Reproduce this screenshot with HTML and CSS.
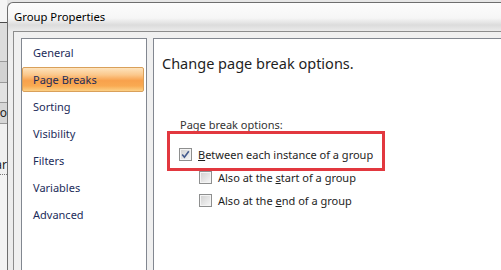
FILE: index.html
```html
<!DOCTYPE html>
<html>
<head>
  <meta charset="UTF-8" />
  <title>Group Properties</title>
  <link rel="stylesheet" href="styles.css">
</head>
<body>
  <div class="desktop">
    <div class="behind">
      <div class="behind-row r1"></div>
      <div class="behind-row r2"></div>
      <div class="behind-row r3"></div>
      <div class="behind-row r4"></div>
      <div class="behind-row r5"><span>Co</span></div>
      <div class="behind-row r6"><span>Var</span></div>
      <div class="behind-row r7"></div>
    </div>
    <div class="dialog">
      <div class="titlebar">Group Properties</div>
      <div class="client">
        <ul class="nav">
          <li>General</li>
          <li class="active">Page Breaks</li>
          <li>Sorting</li>
          <li>Visibility</li>
          <li>Filters</li>
          <li>Variables</li>
          <li>Advanced</li>
        </ul>
        <div class="page">
          <h2>Change page break options.</h2>
          <div class="group-label">Page break options:</div>
          <label class="check">
            <span class="box">
              <svg width="11" height="11" viewBox="0 0 11 11"><path d="M2.2 5.6 L4.4 8.2 L8.8 2.2" fill="none" stroke="#43598c" stroke-width="1.6"/></svg>
            </span>
            <span><u>B</u>etween each instance of a group</span>
          </label>
          <label class="check sub">
            <span class="box"></span>
            <span>Also at the <u>s</u>tart of a group</span>
          </label>
          <label class="check sub">
            <span class="box"></span>
            <span>Also at the <u>e</u>nd of a group</span>
          </label>
          <!-- red annotation box drawn over the first option -->
          <div class="highlight"></div>
        </div>
      </div>
    </div>
  </div>
</body>
</html>
```
FILE: styles.css
```css
body {
  margin: 0;
  padding: 0;
  overflow: hidden;
  font-family: "Noto Sans", "Open Sans", sans-serif;
  font-size: 11px;
  background-color: #e6e6e6;
}
.desktop {
  display: flex;
  height: 290px;
}
.behind {
  width: 7px;
  overflow: hidden;
  background-color: #ececec;
  display: flex;
  flex-direction: column;
}
.behind-row {
  border-bottom: 1px solid #9a9a9a;
  white-space: nowrap;
  direction: rtl;
  font-size: 12px;
  color: #222;
}
.r1 { height: 22px; border-bottom-color: #4a4a4a; background-color: #f4f4f4; }
.r2 { height: 38px; background-color: #dcdcdc; }
.r3 { height: 20px; background-color: #d2d2d2; }
.r4 { height: 19px; background-color: #e2e2e2; }
.r5 { height: 20px; line-height: 20px; background-color: #d6d6d6; }
.r6 { height: 50px; line-height: 82px; background-color: #f0f0f0; border-bottom: 1px dotted #777; }
.r7 { flex: 1; background-color: #f3f3f3; border-bottom: none; }
.dialog {
  flex: 1;
  margin-top: 2px;
  border-top: 1px solid #6e6e6e;
  border-left: 1px solid #6e6e6e;
  border-top-left-radius: 6px;
  padding-left: 5px;
  display: flex;
  flex-direction: column;
  background: linear-gradient(#fcfcfc 0, #f6f6f6 15px, #dcdcdc 22px, #ebebeb 28px, #efefef 60px, #ebebeb);
}
.titlebar {
  height: 28px;
  box-sizing: border-box;
  padding: 6px 0 0 1px;
  font-size: 11.3px;
  line-height: 16px;
  color: #000;
}
.client {
  flex: 1;
  display: flex;
  gap: 6px;
  padding: 6px 0 0 7px;
  border-top: 1px solid #8c8c8c;
  border-left: 1px solid #8c8c8c;
  background-color: #f0f0f0;
}
.nav {
  width: 126px;
  box-sizing: border-box;
  margin: 0;
  padding: 1px 0 0 0;
  list-style: none;
  background-color: #fff;
  border: 1px solid #828790;
}
.nav li {
  height: 25px;
  line-height: 24px;
  margin: 0 2px 2px 0;
  padding-left: 10px;
  box-sizing: border-box;
  border: 1px solid transparent;
  border-radius: 2px;
  color: #1c2c5a;
}
.nav li.active {
  border-color: #d9a05a;
  background: linear-gradient(to bottom, #fde3bd 0%, #fbc88c 30%, #f8a14c 55%, #f9aa52 78%, #fcd085 100%);
}
.page {
  flex: 1;
  position: relative;
  background-color: #fff;
  border: 1px solid #828790;
  border-right: 0;
  color: #1e1e1e;
}
h2 {
  margin: 14px 0 0 8px;
  font-size: 14.5px;
  font-weight: normal;
  line-height: 20px;
}
.group-label {
  margin: 44px 0 10px 26px;
  line-height: 16px;
  color: #333;
}
.check {
  display: flex;
  align-items: center;
  gap: 6px;
  height: 23px;
  margin-left: 25px;
  color: #1e1e1e;
}
.check.sub {
  margin-left: 45px;
}
.box {
  width: 13px;
  height: 13px;
  box-sizing: border-box;
  border: 1px solid #8e8f8f;
  box-shadow: inset 0 0 0 1px #f4f4f4;
  background: linear-gradient(135deg, #cfcfcf, #f8f8f8);
  display: flex;
  align-items: center;
  justify-content: center;
}
.highlight {
  position: absolute;
  left: 13px;
  top: 92px;
  width: 218px;
  height: 40px;
  box-sizing: border-box;
  border: 3px solid #e2383f;
}
```
